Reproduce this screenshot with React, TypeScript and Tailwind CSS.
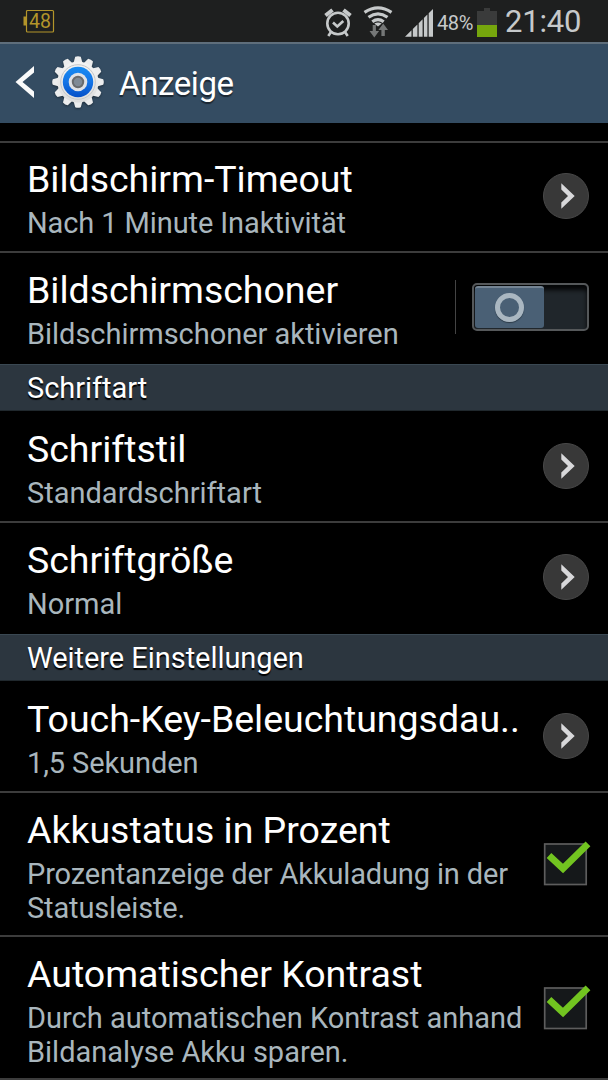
import type { ReactNode } from "react";

const Divider = () => <div className="h-[2px] shrink-0 bg-[#3c3c3c]" />;

const BatteryBadge = () => (
  <svg width="34" height="26" viewBox="0 0 34 26">
    <rect x="0.5" y="8.5" width="3" height="9" fill="#b3952a" />
    <rect x="3.5" y="2.5" width="27" height="21.5" rx="1" fill="none" stroke="#b3952a" strokeWidth="1.2" />
    <text
      x="17"
      y="20"
      textAnchor="middle"
      fontSize="19.5"
      fontFamily="Roboto, sans-serif"
      textLength="22"
      fill="#b3952a"
    >
      48
    </text>
  </svg>
);

const AlarmIcon = () => (
  <svg width="28" height="30" viewBox="0 0 28 30" fill="none" stroke="#c6c9ca">
    <circle cx="14" cy="15.5" r="10.7" strokeWidth="2.6" />
    <path d="M9 14.5l4.300 4 6-5.500" strokeWidth="2.6" />
    <path d="M1.500 7.500L8.500 2M26.500 7.500L19.500 2" strokeWidth="4" />
    <path d="M7 24l-2.700 4M21 24l2.700 4" strokeWidth="2.6" />
  </svg>
);

const WifiIcon = () => (
  <svg width="30" height="32" viewBox="0 0 30 32" fill="none">
    <g stroke="#c6c9ca" strokeWidth="3.2">
      <path d="M1.500 6.300Q15 -2.500 28.500 6.300" />
      <path d="M5.500 11.200Q15 4.500 24.500 11.200" />
      <path d="M9.300 15.700Q15 11.500 20.700 15.700" />
    </g>
    <path d="M11.300 17.500Q15 15.300 18.700 17.500L15 20.500z" fill="#c6c9ca" />
    <path d="M9.700 19h3.200v6h3.200l-4.800 6.500L6.500 25h3.200z" fill="#757777" />
    <path d="M18.400 30v-6h-3l4.800-6.500L25 24h-3.200v6z" fill="#757777" />
  </svg>
);

const SignalIcon = () => (
  <svg width="29" height="28" viewBox="0 0 29 28" fill="#c6c9ca">
    <path d="M0 27.700L6.500 21.300V27.700zM7.800 20L12.400 15.500V27.700H7.800zM13.700 14.200L17.600 10.300V27.700H13.700zM18.900 9L22.400 5.500V27.700H18.900zM23.700 4.200L28 0V27.700H23.700z" />
  </svg>
);

const BatteryIcon = () => (
  <svg width="20" height="29" viewBox="0 0 20 29">
    <path d="M7 0h6v3h7v14H0V3h7z" fill="#3a3b3b" />
    <path d="M0 17h20v12H0z" fill="#76a60d" />
  </svg>
);

const StatusBar = () => (
  <div className="flex h-[42px] shrink-0 items-center bg-[#1e1f1f] text-[#c6c9ca]">
    <div className="ml-[23px] flex-1">
      <BatteryBadge />
    </div>
    <div className="mt-[3px]">
      <AlarmIcon />
    </div>
    <div className="ml-[11px] mt-[1px]">
      <WifiIcon />
    </div>
    <div className="ml-[12px] mt-[4px]">
      <SignalIcon />
    </div>
    <span className="ml-[3px] mt-[3px] w-[37px] whitespace-nowrap text-[20px] tracking-[-0.4px]">48%</span>
    <div className="ml-[3px] mt-[3px]">
      <BatteryIcon />
    </div>
    <span className="ml-[8px] mt-[3px] w-[103px] whitespace-nowrap text-[31px] tracking-[-0.2px]">21:40</span>
  </div>
);

const GearIcon = () => (
  <svg width="54" height="54" viewBox="-27 -27 54 54" className="drop-shadow-[0_1px_1px_#00000066]">
    <defs>
      <linearGradient id="metal" x1="0" y1="0" x2="0" y2="1">
        <stop offset="0" stopColor="#f4f4f4" />
        <stop offset="1" stopColor="#dcdddd" />
      </linearGradient>
      <linearGradient id="blue" x1="0" y1="0" x2="0" y2="1">
        <stop offset="0" stopColor="#168bf2" />
        <stop offset="0.5" stopColor="#1474e6" />
        <stop offset="1" stopColor="#0450c8" />
      </linearGradient>
    </defs>
    <g fill="#ecedee">
      {[0, 30, 60, 90, 120, 150, 180, 210, 240, 270, 300, 330].map((angle) => (
        <path key={angle} transform={`rotate(${angle})`} d="M-4.500 -19L-2.800 -25.200Q0 -26.400 2.800 -25.200L4.500 -19z" />
      ))}
    </g>
    <circle r="20.600" fill="url(#metal)" />
    <circle r="17.300" fill="none" stroke="#c5c7c9" />
    <circle r="15.200" fill="url(#blue)" />
    <circle r="9.300" fill="#dfe2e6" />
    <circle r="5.200" fill="#7f8a95" stroke="#686b6e" strokeWidth="2" />
  </svg>
);

const TitleBar = () => (
  <div className="flex h-[81px] shrink-0 items-center border-t-2 border-[#5f6e7b] bg-[#344c62]">
    <svg width="20" height="34" viewBox="0 0 20 34" className="mb-[3px] ml-[15px]">
      <path d="M19 1v6.500L7.500 17 19 26.500V33L0.500 17z" fill="#fafafa" />
    </svg>
    <div className="ml-[16px] mt-[-4px]">
      <GearIcon />
    </div>
    <h1 className="ml-[14px] text-[33px] leading-[40px] tracking-[-0.4px] text-white [text-shadow:0_2px_1px_#00000080]">
      Anzeige
    </h1>
  </div>
);

const ArrowButton = () => (
  <button className="flex size-[46px] items-center justify-center rounded-full border border-[#494949] bg-[#383838]">
    <svg width="14" height="26" viewBox="0 0 14 26" className="ml-[4px]">
      <path d="M0.300 0.300L13.700 13 0.300 25.700V19.500L7 13 0.300 6.500z" fill="#d8d8da" />
    </svg>
  </button>
);

const Toggle = () => (
  <div className="flex items-center">
    <div className="h-[54px] w-px bg-[#444]" />
    <div className="ml-[16px] flex h-[48px] w-[117px] rounded-[5px] border-2 border-[#55585a] bg-[#20262b] p-[1px] shadow-[inset_0_5px_4px_#050607]">
      <div className="flex h-full w-[69px] items-center justify-center rounded-[3px] border-t-2 border-[#748493] bg-[#4a6075]">
        <div className="mb-[2px] size-[29px] rounded-full border-[5px] border-[#aab7c1] shadow-[0_1px_1px_#2c3b48]" />
      </div>
    </div>
  </div>
);

const Checkbox = () => (
  <svg width="48" height="46" viewBox="0 0 48 46">
    <rect x="1.700" y="4" width="41.500" height="40.500" fill="#15181a" stroke="#5d5d5d" strokeWidth="1.7" />
    <path d="M6 15.500L20 28.500 45 3.800" fill="none" stroke="#72c420" strokeWidth="6.8" />
  </svg>
);

interface SettingRowProps {
  title: string;
  summary: string;
  // row height and the space above the title
  className: string;
  summaryClass?: string;
  children: ReactNode;
}

const SettingRow = ({ title, summary, className, summaryClass = "", children }: SettingRowProps) => (
  <div className={`flex shrink-0 justify-between pl-[27px] ${className}`}>
    <div>
      <div className="whitespace-nowrap text-[37.5px] leading-[42px] tracking-[-0.02px] text-white">{title}</div>
      <div className={`mt-[6px] whitespace-pre-line text-[29px] leading-[34px] text-[#a9b6bd] ${summaryClass}`}>
        {summary}
      </div>
    </div>
    <div className="shrink-0">{children}</div>
  </div>
);

const SectionHeader = ({ label }: { label: string }) => (
  <div className="flex h-[47px] shrink-0 items-center border-y border-t-[#3a4852] border-b-[#20282d] bg-[#2c363f] pl-[27px]">
    <h2 className="text-[29px] leading-[36px] tracking-[-0.05px] text-white [text-shadow:0_2px_1px_#000]">{label}</h2>
  </div>
);

const App = () => {
  return (
    <div className="flex h-[1080px] w-[608px] flex-col overflow-hidden bg-black font-[Roboto,sans-serif]">
      <StatusBar />
      <TitleBar />
      <div className="h-[18px] shrink-0" />
      <Divider />
      <SettingRow
        title="Bildschirm-Timeout"
        summary="Nach 1 Minute Inaktivität"
        className="h-[108px] pt-[15px]"
        summaryClass="tracking-[-0.1px]"
      >
        <div className="mr-[19px] mt-[15px]"><ArrowButton /></div>
      </SettingRow>
      <Divider />
      <SettingRow
        title="Bildschirmschoner"
        summary="Bildschirmschoner aktivieren"
        className="h-[111px] pt-[16px]"
        summaryClass="tracking-[-0.03px]"
      >
        <div className="mr-[19px] mt-[11px]"><Toggle /></div>
      </SettingRow>
      <SectionHeader label="Schriftart" />
      <SettingRow title="Schriftstil" summary="Standardschriftart" className="h-[110px] pt-[17px]">
        <div className="mr-[19px] mt-[15px]"><ArrowButton /></div>
      </SettingRow>
      <Divider />
      <SettingRow title="Schriftgröße" summary="Normal" className="h-[111px] pt-[16px]">
        <div className="mr-[19px] mt-[15px]"><ArrowButton /></div>
      </SettingRow>
      <SectionHeader label="Weitere Einstellungen" />
      <SettingRow
        title="Touch-Key-Beleuchtungsdau.."
        summary="1,5 Sekunden"
        className="h-[110px] pt-[17px]"
        summaryClass="tracking-[-0.1px]"
      >
        <div className="mr-[19px] mt-[15px]"><ArrowButton /></div>
      </SettingRow>
      <Divider />
      <SettingRow
        title="Akkustatus in Prozent"
        summary={"Prozentanzeige der Akkuladung in der\nStatusleiste."}
        className="h-[142px] pt-[16px]"
        summaryClass="tracking-[-0.14px]"
      >
        <div className="mr-[17px] mt-[31px]"><Checkbox /></div>
      </SettingRow>
      <Divider />
      <SettingRow
        title="Automatischer Kontrast"
        summary={"Durch automatischen Kontrast anhand\nBildanalyse Akku sparen."}
        className="h-[141px] pt-[16px]"
      >
        <div className="mr-[17px] mt-[31px]"><Checkbox /></div>
      </SettingRow>
      <Divider />
    </div>
  );
};

export default App;
